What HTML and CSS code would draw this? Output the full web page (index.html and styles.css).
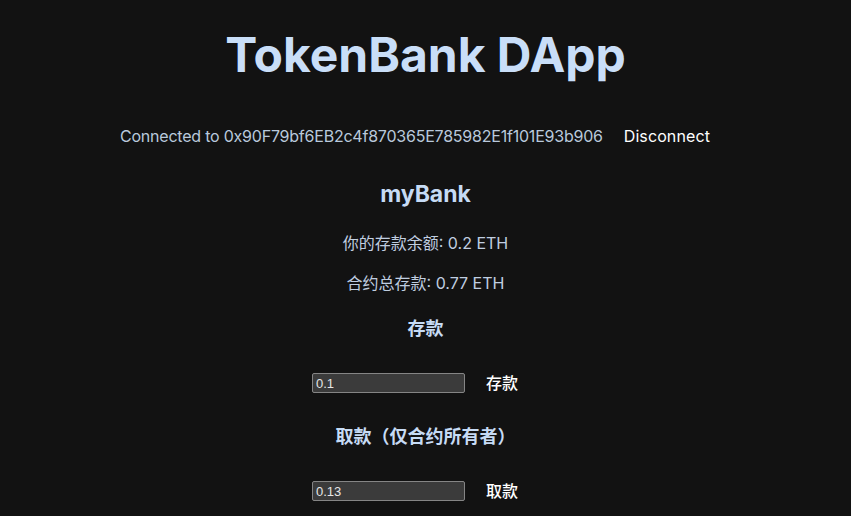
FILE: index.html
```html
<!DOCTYPE html>
<html lang="zh">
<head>
<meta charset="utf-8">
<title>TokenBank DApp</title>
<link rel="stylesheet" href="styles.css">
</head>
<body>
<main class="app">
  <h1 class="title">TokenBank DApp</h1>
  <div class="status">
    <span class="address">Connected to 0x90F79bf6EB2c4f870365E785982E1f101E93b906</span>
    <button class="btn">Disconnect</button>
  </div>
  <h2 class="bank">myBank</h2>
  <p class="info first">你的存款余额: 0.2 ETH</p>
  <p class="info">合约总存款: 0.77 ETH</p>
  <h3 class="section">存款</h3>
  <div class="row">
    <input class="amount" type="text" value="0.1">
    <button class="btn">存款</button>
  </div>
  <h3 class="section">取款（仅合约所有者）</h3>
  <div class="row">
    <input class="amount" type="text" value="0.13">
    <button class="btn">取款</button>
  </div>
</main>
</body>
</html>
```
FILE: styles.css
```css
html, body {
  margin: 0;
  padding: 0;
  background: #121212;
  height: 100%;
  overflow: hidden;
}
body {
  font-family: Inter, "Noto Sans CJK SC", sans-serif;
  color: #c3d2e4;
}
.app {
  display: flex;
  flex-direction: column;
  align-items: center;
  text-align: center;
  padding-top: 26px;
}
.title {
  margin: 0;
  font-size: 48px;
  line-height: 58px;
  font-weight: 700;
  color: #c9def8;
}
.status {
  margin-top: 40px;
  display: flex;
  align-items: center;
  font-size: 16px;
  line-height: 24px;
}
.address {
  color: #b9c9dc;
  letter-spacing: -0.22px;
}
.btn {
  background: transparent;
  border: none;
  color: #ffffff;
  font-family: Inter, "Noto Sans CJK SC", sans-serif;
  font-size: 16px;
  font-weight: 500;
  line-height: 24px;
  padding: 0 21px;
  cursor: pointer;
}
.status .btn {
  font-weight: 400;
  letter-spacing: 0.1px;
}
.bank {
  margin: 32px 0 0;
  font-size: 23px;
  line-height: 28px;
  font-weight: 700;
  color: #c6dbf5;
}
.info {
  margin: 16px 0 0;
  font-size: 16px;
  line-height: 24px;
  color: #c0cee0;
}
.info.first {
  margin-top: 23px;
}
.section {
  margin: 22px 0 0;
  font-size: 18px;
  line-height: 24px;
  font-weight: 700;
  color: #c6dbf5;
}
.row + .section {
  margin-top: 30px;
}
.row {
  margin-top: 30px;
  display: flex;
  align-items: center;
  height: 24px;
}
.row:last-child {
  margin-top: 30px;
}
.amount {
  box-sizing: border-box;
  width: 153px;
  height: 20px;
  padding: 1px 3px;
  background: #3b3b3b;
  border: 1px solid #858585;
  border-radius: 2px;
  color: #e6e6e6;
  font-family: "Liberation Sans", Arial, sans-serif;
  font-size: 13px;
}
.row .btn {
  padding: 0 21px;
}
```
